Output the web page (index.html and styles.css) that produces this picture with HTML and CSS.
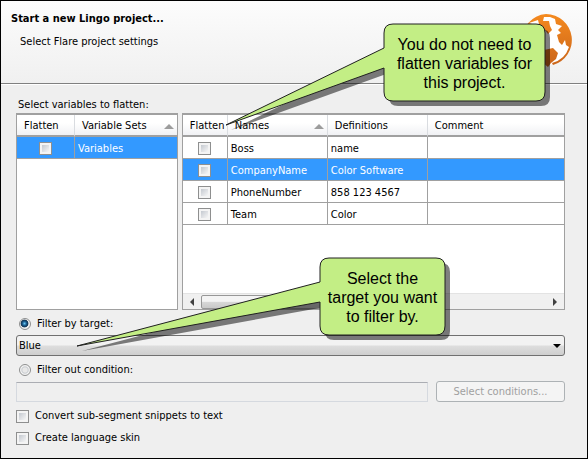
FILE: index.html
```
<!DOCTYPE html>
<html lang="en">
<head>
<meta charset="utf-8">
<title>Start a new Lingo project</title>
<link rel="stylesheet" href="styles.css">
</head>
<body>
<main class="wizard">
  <header class="banner">
    <div>
      <h1>Start a new Lingo project...</h1>
      <p>Select Flare project settings</p>
    </div>
    <svg class="globe" viewBox="0 0 52 56" aria-hidden="true">
      <defs>
        <linearGradient id="orange" x1="0" y1="0" x2="0" y2="1"><stop offset="0" stop-color="#f58a1f"/><stop offset="1" stop-color="#c9641a"/></linearGradient>
      </defs>
      <circle cx="26" cy="28" r="25" fill="#fff"/>
      <path fill="url(#orange)" d="M26 2 A26 26 0 0 1 33 53 L32 51 A24 24 0 0 0 49 35 L46 33 L45 28 L42 33 L39 30 L37 23 L41 21 L38 18 L42 14 L36 12 L35 7 L30 5 L24 5 L23 9 L29 9 L30 14 L32 18 L28 22 L25 18 L20 22 L10 28 L2 30 A26 26 0 0 1 26 2 Z M24 38 L33 36 L38 41 L36 47 L31 51 L28 55 L22 50 Z"/>
      <path fill="#fff" d="M9 11 L18 8 L19 12 L15 13 Z"/>
    </svg>
  </header>

  <form class="settings">
    <h2>Select variables to flatten:</h2>
    <div class="lists">
      <div class="list sets">
        <table>
          <colgroup><col class="c-set-flag"><col></colgroup>
          <thead><tr><th>Flatten</th><th><span class="sort">Variable Sets</span></th></tr></thead>
          <tbody><tr class="selected"><td class="flag"><input type="checkbox" aria-label="Flatten Variables"></td><td>Variables</td></tr></tbody>
        </table>
      </div>
      <div class="list variables">
        <table>
          <colgroup><col class="c-flag"><col class="c-text"><col class="c-text"><col></colgroup>
          <thead><tr><th>Flatten</th><th><span class="sort">Names</span></th><th>Definitions</th><th>Comment</th></tr></thead>
          <tbody>
            <tr><td class="flag"><input type="checkbox" aria-label="Flatten Boss"></td><td>Boss</td><td>name</td><td></td></tr>
            <tr class="selected"><td class="flag"><input type="checkbox" aria-label="Flatten CompanyName"></td><td>CompanyName</td><td>Color Software</td><td></td></tr>
            <tr><td class="flag"><input type="checkbox" aria-label="Flatten PhoneNumber"></td><td>PhoneNumber</td><td>858 123 4567</td><td></td></tr>
            <tr><td class="flag"><input type="checkbox" aria-label="Flatten Team"></td><td>Team</td><td>Color</td><td></td></tr>
          </tbody>
        </table>
        <div class="scrollbar" aria-hidden="true"><i class="arrow left"></i><i class="thumb"></i><i class="arrow right"></i></div>
      </div>
    </div>

    <label class="option radio"><input type="radio" name="filter" checked>Filter by target:</label>
    <div class="dropdown">
      <select class="target" aria-label="Target"><option>Blue</option></select>
    </div>
    <label class="option radio"><input type="radio" name="filter">Filter out condition:</label>
    <div class="condition">
      <input type="text" aria-label="Condition" disabled>
      <button type="button" disabled>Select conditions...</button>
    </div>
    <label class="option"><input type="checkbox">Convert sub-segment snippets to text</label>
    <label class="option"><input type="checkbox">Create language skin</label>
  </form>

  <aside class="callout flatten-note">
    <svg width="328" height="112" aria-hidden="true">
      <path class="shade" transform="translate(5 5)" d="M168 1 H311 Q320 1 320 10 V69 Q320 78 311 78 H168 Q159 78 159 69 V45 L1 102 L159 25 V10 Q159 1 168 1 Z"/>
      <path class="bubble" d="M168 1 H311 Q320 1 320 10 V69 Q320 78 311 78 H168 Q159 78 159 69 V45 L1 102 L159 25 V10 Q159 1 168 1 Z"/>
    </svg>
    <p>You do not need to<br>flatten variables for<br>this project.</p>
  </aside>
  <aside class="callout target-note">
    <svg width="376" height="96" aria-hidden="true">
      <path class="shade" transform="translate(5 5)" d="M253 1 H360 Q369 1 369 10 V69 Q369 78 360 78 H253 Q244 78 244 69 V45 L1 89 L244 25 V10 Q244 1 253 1 Z"/>
      <path class="bubble" d="M253 1 H360 Q369 1 369 10 V69 Q369 78 360 78 H253 Q244 78 244 69 V45 L1 89 L244 25 V10 Q244 1 253 1 Z"/>
    </svg>
    <p>Select the<br>target you want<br>to filter by.</p>
  </aside>
</main>
</body>
</html>
```
FILE: styles.css
```
* { box-sizing: border-box; }
body { margin: 0; color: #000; font: 11px/14px "DejaVu Sans Condensed", "DejaVu Sans", sans-serif; }
h1, h2, p { margin: 0; font-size: 11px; line-height: 14px; }
h2 { font-weight: normal; }
input, select, button { margin: 0; font: inherit; }

.wizard { position: relative; min-height: 100vh; border: 1px solid #000; background: #efefef; overflow: hidden; }
.banner { display: flex; justify-content: space-between; height: 83px; padding: 11px 15px 0 10px; border-bottom: 1px solid #808080; background: linear-gradient(to top, #f0f0f0, #fcfcfc); }
.banner p { padding: 9px 0 0 9px; }
.globe { width: 52px; height: 56px; }

.settings { display: flex; flex-direction: column; padding: 13px 22px 0 15px; border-top: 1px solid #fff; }
.settings h2 { padding-left: 2px; margin-bottom: 1px; }
.lists { display: flex; gap: 4px; height: 197px; }
.list { display: flex; flex-direction: column; justify-content: space-between; border: 1px solid #a0a0a0; border-top-width: 2px; background: #fff; }
.sets { flex: 161 1 0; }
.variables { flex: 384 1 0; }
table { width: 100%; table-layout: fixed; border-collapse: separate; border-spacing: 0; }
.c-set-flag { width: 58px; }
.c-flag { width: 45px; }
.c-text { width: 100px; }
th { height: 22px; padding: 2px 7px 0; border-right: 1px solid #d9dce0; border-bottom: 2px solid #a0a0a0; background: linear-gradient(#fff 40%, #f0f1f4); font-weight: normal; text-align: left; white-space: nowrap; }
th:last-child { border-right: 0; }
td { height: 22px; padding: 2px 3px 0; border-right: 1px solid #a0a0a0; border-bottom: 1px solid #a0a0a0; white-space: nowrap; }
td:last-child { border-right: 0; }
.sort { display: flex; align-items: center; justify-content: space-between; }
.sort::after { content: ""; border: 5px solid transparent; border-top: 0; border-bottom-color: #9c9c9c; margin-right: -4px; }
.selected td { background: #3399ff; color: #fff; }
.flag { text-align: center; }

input[type="checkbox"] { appearance: none; flex: none; width: 13px; height: 13px; border: 1px solid #8e8f8f; background: linear-gradient(135deg, #c4c9d0, #f6f6f6) content-box, #f4f4f4; padding: 2px; vertical-align: middle; }
input[type="radio"] { appearance: none; flex: none; width: 12px; height: 12px; border: 1px solid #8e8f8f; border-radius: 50%; background: radial-gradient(#e8e8e8 30%, #c8ccd0 45%, #f4f4f4 60%); }
input[type="radio"]:checked { background: radial-gradient(circle at 45% 45%, #6cc8f0 0, #1b5f93 25%, #12334f 45%, #f0f0f0 55%); }

.scrollbar { display: flex; align-items: center; height: 16px; padding: 0 7px; border-top: 1px solid #e3e3e3; background: #f0f0f0; }
.arrow { border: 4px solid transparent; }
.left { border-left: 0; border-right-color: #404040; }
.right { margin-left: auto; border-right: 0; border-left-color: #404040; }
.thumb { width: 66%; height: 14px; margin-left: 7px; border: 1px solid #979797; border-radius: 2px; background: linear-gradient(#f4f4f4 45%, #d8d8d8 50%, #c9c9c9); }

.option { display: flex; align-items: center; gap: 6px; height: 22px; }
.radio { height: 25px; padding: 3px 0 0 3px; }
.dropdown { position: relative; display: flex; }
.dropdown::after { content: ""; position: absolute; right: 4px; top: 9px; border: 4px solid transparent; border-top-color: #000; border-bottom: 0; pointer-events: none; }
.target { appearance: none; flex: 1; height: 21px; padding: 0 2px; border: 1px solid #707070; border-radius: 3px; color: #000; background: linear-gradient(#f2f2f2 48%, #dddddd 52%, #cfcfcf); }
.condition { display: flex; align-items: center; gap: 8px; margin-bottom: 3px; }
.condition input { flex: 1; min-width: 0; height: 20px; border: 1px solid #d5d9df; border-top-color: #abadb3; background: #efefef; }
.condition button { width: 129px; height: 21px; padding: 0; border: 1px solid #adb2b5; border-radius: 3px; background: #f4f4f4; color: #a0a0a0; }

.callout { position: absolute; color: #000; font: 16px/19px "Liberation Sans", Arial, sans-serif; text-align: center; }
.callout svg { display: block; }
.callout p { position: absolute; top: 12px; font: inherit; white-space: nowrap; }
.bubble { fill: #c3ee85; stroke: #202020; stroke-width: 1; }
.shade { fill: #000; fill-opacity: .5; }
.flatten-note { left: 224px; top: 22px; }
.flatten-note p { left: 159px; width: 161px; }
.target-note { left: 75px; top: 256px; }
.target-note p { left: 244px; width: 125px; }
```
